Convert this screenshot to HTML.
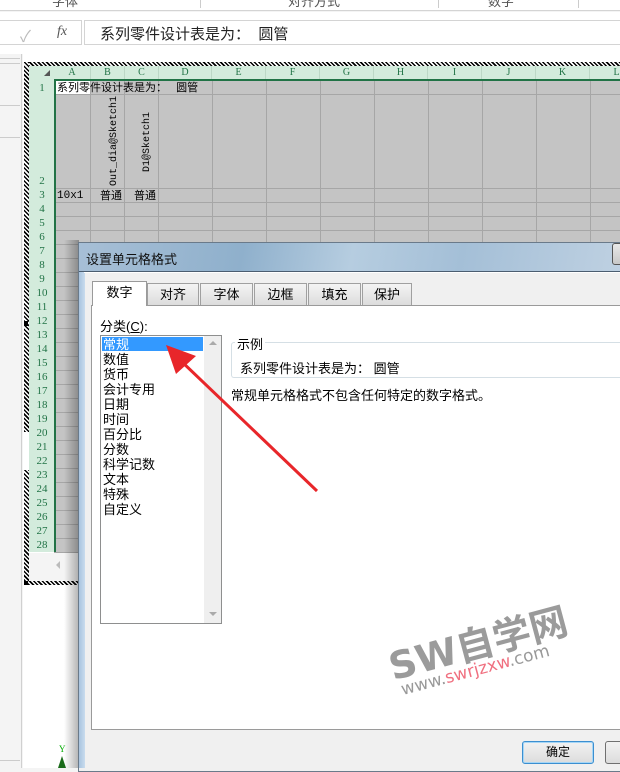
<!DOCTYPE html>
<html><head><meta charset="utf-8"><style>
*{margin:0;padding:0;box-sizing:border-box}
body{width:620px;height:768px;overflow:hidden;position:relative;background:#f4f4f4;font-family:"Liberation Sans","Noto Sans CJK SC",sans-serif}
.a{position:absolute}
.cj{font-family:"Liberation Sans","Noto Sans CJK SC",sans-serif}
.ser{font-family:"Liberation Serif","Noto Serif CJK SC",serif}
.hatch{background:repeating-linear-gradient(45deg,#000 0 1.5px,#fff 1.5px 3px)}
.rh{position:absolute;left:30px;width:24px;height:14px;font-size:11px;color:#217346;text-align:center;line-height:14px;font-family:"Liberation Serif",serif}
.ch{position:absolute;top:66px;height:14px;font-size:10px;color:#217346;text-align:center;line-height:14px;font-family:"Liberation Serif",serif;border-right:1px solid #bcd7c6}
.vl{position:absolute;top:80px;height:472px;width:1px;background:#a6a6a6}
.hl{position:absolute;left:54px;width:566px;height:1px;background:#a6a6a6}
.tab{position:absolute;top:283px;height:22px;background:linear-gradient(#f4f4f4,#dcdcdc);border:1px solid #a0a0a0;border-bottom:none;font-size:13px;text-align:center;line-height:22px}
.it{position:absolute;left:103px;font-size:13px;line-height:15px;height:15px}
</style></head><body>
<div class="a" style="left:0;top:0;width:620px;height:11px;background:#fff;border-bottom:1px solid #d4d4d4"></div>
<div class="a cj" style="left:52px;top:-9px;font-size:13px;color:#555">字体</div>
<div class="a cj" style="left:288px;top:-9px;font-size:13px;color:#555">对齐方式</div>
<div class="a cj" style="left:488px;top:-9px;font-size:13px;color:#555">数字</div>
<div class="a" style="left:200px;top:0;width:1px;height:8px;background:#ccc"></div>
<div class="a" style="left:438px;top:0;width:1px;height:8px;background:#ccc"></div>
<div class="a" style="left:578px;top:0;width:1px;height:8px;background:#ccc"></div>
<div class="a" style="left:0;top:12px;width:620px;height:42px;background:#fff"></div>
<div class="a" style="left:0;top:20px;width:82px;height:25px;border:1px solid #d4d4d4;border-left:none;background:#fff"></div>
<div class="a" style="left:20px;top:23px;font-size:16px;color:#bbb">✓</div>
<div class="a ser" style="left:57px;top:24px;font-size:14px;font-style:italic;color:#555">fx</div>
<div class="a" style="left:84px;top:20px;width:540px;height:25px;border:1px solid #d4d4d4;background:#fff"></div>
<div class="a cj" style="left:100px;top:23px;font-size:15px;color:#222">系列零件设计表是为：&nbsp;&nbsp;圆管</div>
<div class="a" style="left:0;top:54px;width:22px;height:714px;background:#f4f4f4;border-right:1px solid #d0d0d0"></div>
<div class="a" style="left:0;top:58px;width:20px;height:1px;background:#ccc"></div>
<div class="a" style="left:0;top:63px;width:20px;height:1px;background:#ccc"></div>
<div class="a" style="left:0;top:105px;width:20px;height:1px;background:#ccc"></div>
<div class="a" style="left:0;top:137px;width:20px;height:1px;background:#ccc"></div>
<div class="a" style="left:0;top:760px;width:20px;height:1px;background:#ccc"></div>
<div class="a" style="left:23px;top:54px;width:600px;height:714px;background:#fff"></div>
<div class="a hatch" style="left:24px;top:62px;width:600px;height:4px"></div>
<div class="a hatch" style="left:24px;top:62px;width:5px;height:370px"></div>
<div class="a hatch" style="left:24px;top:470px;width:5px;height:115px"></div>
<div class="a hatch" style="left:24px;top:581px;width:600px;height:4px"></div>
<div class="a" style="left:24px;top:321px;width:4px;height:5px;background:#000"></div>
<div class="a" style="left:24px;top:581px;width:4px;height:4px;background:#000"></div>
<div class="a" style="left:29px;top:66px;width:600px;height:14px;background:#d3ebdc"></div>
<div class="a" style="left:29px;top:80px;width:25px;height:472px;background:#d3ebdc"></div>
<div class="a" style="left:44px;top:70px;width:0;height:0;border-left:6px solid transparent;border-bottom:6px solid #555"></div>
<div class="ch" style="left:54px;width:37px">A</div>
<div class="ch" style="left:91px;width:34px">B</div>
<div class="ch" style="left:125px;width:34px">C</div>
<div class="ch" style="left:159px;width:53px">D</div>
<div class="ch" style="left:212px;width:54px">E</div>
<div class="ch" style="left:266px;width:54px">F</div>
<div class="ch" style="left:320px;width:54px">G</div>
<div class="ch" style="left:374px;width:54px">H</div>
<div class="ch" style="left:428px;width:54px">I</div>
<div class="ch" style="left:482px;width:54px">J</div>
<div class="ch" style="left:536px;width:54px">K</div>
<div class="ch" style="left:590px;width:54px">L</div>
<div class="a" style="left:55px;top:81px;width:570px;height:471px;background:#c4c4c4"></div>
<div class="a" style="left:55px;top:81px;width:36px;height:14px;background:#fff"></div>
<div class="vl" style="left:90px"></div><div class="vl" style="left:124px"></div><div class="vl" style="left:158px"></div><div class="vl" style="left:212px"></div><div class="vl" style="left:266px"></div><div class="vl" style="left:320px"></div><div class="vl" style="left:374px"></div><div class="vl" style="left:428px"></div><div class="vl" style="left:482px"></div><div class="vl" style="left:536px"></div><div class="vl" style="left:590px"></div>
<div class="hl" style="top:94px"></div><div class="hl" style="top:188px"></div><div class="hl" style="top:202px"></div>
<div class="hl" style="top:216px"></div><div class="hl" style="top:230px"></div><div class="hl" style="top:244px"></div><div class="hl" style="top:258px"></div><div class="hl" style="top:272px"></div><div class="hl" style="top:286px"></div><div class="hl" style="top:300px"></div><div class="hl" style="top:314px"></div><div class="hl" style="top:328px"></div><div class="hl" style="top:342px"></div><div class="hl" style="top:356px"></div><div class="hl" style="top:370px"></div><div class="hl" style="top:384px"></div><div class="hl" style="top:398px"></div><div class="hl" style="top:412px"></div><div class="hl" style="top:426px"></div><div class="hl" style="top:440px"></div><div class="hl" style="top:454px"></div><div class="hl" style="top:468px"></div><div class="hl" style="top:482px"></div><div class="hl" style="top:496px"></div><div class="hl" style="top:510px"></div><div class="hl" style="top:524px"></div><div class="hl" style="top:538px"></div><div class="hl" style="top:552px"></div>
<div class="a" style="left:54px;top:80px;width:2px;height:472px;background:#217346"></div>
<div class="a" style="left:54px;top:79px;width:570px;height:2px;background:#217346"></div>
<div class="a cj" style="left:57px;top:81px;font-size:11px;line-height:14px">系列零件设计表是为：&nbsp;&nbsp;&nbsp;圆管</div>
<div class="a" style="left:109px;top:186px;font-size:10px;font-family:'Liberation Mono',monospace;transform:rotate(-90deg);transform-origin:0 0;white-space:nowrap">Out_dia@Sketch1</div>
<div class="a" style="left:142px;top:172px;font-size:10px;font-family:'Liberation Mono',monospace;transform:rotate(-90deg);transform-origin:0 0;white-space:nowrap">D1@Sketch1</div>
<div class="a" style="left:57px;top:189px;font-size:11px;line-height:14px;font-family:'Liberation Mono',monospace">10x1</div>
<div class="a cj" style="left:100px;top:189px;font-size:11px;line-height:14px">普通</div>
<div class="a cj" style="left:134px;top:189px;font-size:11px;line-height:14px">普通</div>
<div class="rh" style="top:81px">1</div><div class="rh" style="top:174px">2</div><div class="rh" style="top:188px">3</div>
<div class="rh" style="top:202px">4</div><div class="rh" style="top:216px">5</div><div class="rh" style="top:230px">6</div><div class="rh" style="top:244px">7</div><div class="rh" style="top:258px">8</div><div class="rh" style="top:272px">9</div><div class="rh" style="top:286px">10</div><div class="rh" style="top:300px">11</div><div class="rh" style="top:314px">12</div><div class="rh" style="top:328px">13</div><div class="rh" style="top:342px">14</div><div class="rh" style="top:356px">15</div><div class="rh" style="top:370px">16</div><div class="rh" style="top:384px">17</div><div class="rh" style="top:398px">18</div><div class="rh" style="top:412px">19</div><div class="rh" style="top:426px">20</div><div class="rh" style="top:440px">21</div><div class="rh" style="top:454px">22</div><div class="rh" style="top:468px">23</div><div class="rh" style="top:482px">24</div><div class="rh" style="top:496px">25</div><div class="rh" style="top:510px">26</div><div class="rh" style="top:524px">27</div><div class="rh" style="top:538px">28</div>
<div class="a" style="left:29px;top:553px;width:600px;height:28px;background:#f4f4f4"></div>
<div class="a" style="left:56px;top:561px;width:0;height:0;border-top:4px solid transparent;border-bottom:4px solid transparent;border-right:4px solid #bbb"></div>
<div class="a ser" style="left:59px;top:744px;font-size:9px;color:#0a0">Y</div>
<div class="a" style="left:58px;top:756px;width:0;height:0;border-left:4px solid transparent;border-right:4px solid transparent;border-bottom:12px solid #1a6b1a"></div>
<!-- dialog -->
<div class="a" style="left:64px;top:240px;width:15px;height:528px;background:linear-gradient(90deg,rgba(0,0,0,0),rgba(0,0,0,.3))"></div>
<div class="a" style="left:78px;top:242px;width:550px;height:530px;background:#f0f0f0;border:1px solid #6a7a8a"></div>
<div class="a" style="left:79px;top:243px;width:6px;height:525px;background:linear-gradient(90deg,#a9c4df,#c9dcee)"></div>
<div class="a" style="left:79px;top:243px;width:545px;height:29px;background:linear-gradient(100deg,#a7bfd6 0%,#8fb0cc 30%,#b6cde0 50%,#a4bfd7 70%,#bfd1e2 100%);border-bottom:1px solid #4b5d70"></div>
<div class="a" style="left:612px;top:243px;width:12px;height:22px;background:linear-gradient(#e8e8e8,#c8c8c8);border:1px solid #555;border-radius:3px"></div>
<div class="a cj" style="left:86px;top:249px;font-size:13px;color:#111">设置单元格格式</div>
<div class="a" style="left:84px;top:272px;width:540px;height:1px;background:#fff"></div>
<div class="a" style="left:91px;top:305px;width:540px;height:425px;background:#fff;border:1px solid #9a9a9a;border-right:none"></div>
<div class="tab cj" style="left:92px;top:281px;width:55px;height:25px;background:#fff;border-color:#9a9a9a">数字</div>
<div class="tab cj" style="left:147px;width:52px">对齐</div>
<div class="tab cj" style="left:200px;width:53px">字体</div>
<div class="tab cj" style="left:254px;width:53px">边框</div>
<div class="tab cj" style="left:308px;width:53px">填充</div>
<div class="tab cj" style="left:362px;width:50px">保护</div>
<div class="a cj" style="left:100px;top:316px;font-size:13px">分类(<u>C</u>):</div>
<div class="a" style="left:100px;top:335px;width:122px;height:289px;border:1px solid #8e8f8f;background:#fff"></div>
<div class="a" style="left:204px;top:336px;width:17px;height:287px;background:#efefef"></div>
<div class="a" style="left:209px;top:341px;width:0;height:0;border-left:4px solid transparent;border-right:4px solid transparent;border-bottom:4px solid #aaa"></div>
<div class="a" style="left:209px;top:612px;width:0;height:0;border-left:4px solid transparent;border-right:4px solid transparent;border-top:4px solid #aaa"></div>
<div class="a" style="left:102px;top:337px;width:101px;height:14px;background:#3399ff"></div>
<div class="it cj" style="top:337px;color:#fff">常规</div>
<div class="it cj" style="top:352px">数值</div>
<div class="it cj" style="top:367px">货币</div>
<div class="it cj" style="top:382px">会计专用</div>
<div class="it cj" style="top:397px">日期</div>
<div class="it cj" style="top:412px">时间</div>
<div class="it cj" style="top:427px">百分比</div>
<div class="it cj" style="top:442px">分数</div>
<div class="it cj" style="top:457px">科学记数</div>
<div class="it cj" style="top:472px">文本</div>
<div class="it cj" style="top:487px">特殊</div>
<div class="it cj" style="top:502px">自定义</div>
<div class="a" style="left:231px;top:342px;width:400px;height:36px;border:1px solid #d5dfe5;border-right:none;border-radius:3px"></div>
<div class="a cj" style="left:235px;top:334px;font-size:13px;background:#fff;padding:0 2px">示例</div>
<div class="a cj" style="left:240px;top:358px;font-size:13px">系列零件设计表是为：&nbsp;圆管</div>
<div class="a cj" style="left:231px;top:385px;font-size:13px">常规单元格格式不包含任何特定的数字格式。</div>
<svg class="a" style="left:0;top:0" width="620" height="768"><line x1="317" y1="491" x2="180" y2="360" stroke="#e8262a" stroke-width="3"/><polygon points="166,345 196,356 176,374" fill="#e8262a"/></svg>
<div class="a" style="left:396px;top:636px;transform:rotate(-15deg);transform-origin:0 100%;white-space:nowrap">
<span style="font-size:38px;color:#8a8a8a;font-family:'DejaVu Sans','Noto Sans CJK SC',sans-serif;font-weight:bold;opacity:.85">SW自学网</span></div>
<div class="a" style="left:404px;top:680px;transform:rotate(-15deg);transform-origin:0 100%;white-space:nowrap;font-size:17px;font-family:'DejaVu Sans',sans-serif;color:#999">www.<span style="color:#f07080">swrjzxw</span>.com</div>
<div class="a cj" style="left:522px;top:741px;width:72px;height:23px;border:1px solid #3c8fd0;border-radius:3px;background:linear-gradient(#f2f2f2,#dcdcdc);box-shadow:inset 0 0 0 1px #a6d6f6;font-size:12px;text-align:center;line-height:21px">确定</div>
<div class="a" style="left:605px;top:741px;width:30px;height:23px;border:1px solid #707070;border-radius:3px;background:linear-gradient(#f2f2f2,#dcdcdc)"></div>
</body></html>
